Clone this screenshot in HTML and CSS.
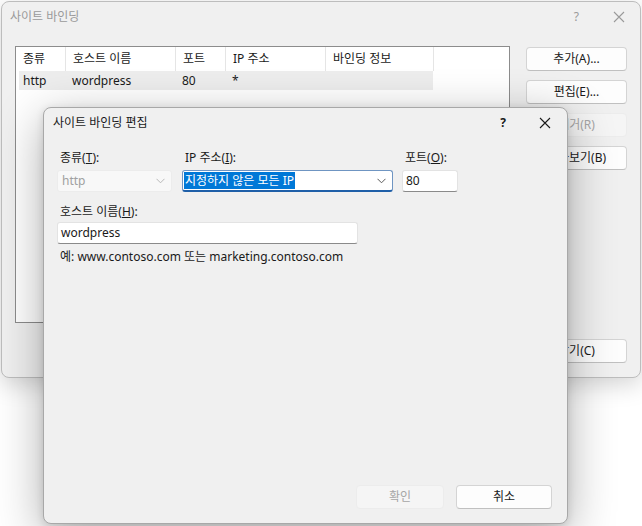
FILE: index.html
```html
<!DOCTYPE html>
<html lang="ko">
<head>
<meta charset="utf-8">
<title>사이트 바인딩</title>
<link rel="stylesheet" href="styles.css">
</head>
<body>
<div class="desk">
  <section class="win outer">
    <header class="titlebar">
      <span class="title inactive">사이트 바인딩</span>
      <span class="caps">
        <span class="help inactive">?</span>
        <svg class="x" width="12" height="12" viewBox="0 0 12 12"><path d="M1 1 L11 11 M11 1 L1 11" stroke="#9a9a9a" stroke-width="1.1" fill="none"/></svg>
      </span>
    </header>
    <div class="outer-body">
      <div class="list">
        <div class="lrow head">
          <span class="c1">종류</span><span class="c2">호스트 이름</span><span class="c3">포트</span><span class="c4">IP 주소</span><span class="c5">바인딩 정보</span>
        </div>
        <div class="lrow item">
          <span class="c1">http</span><span class="c2">wordpress</span><span class="c3">80</span><span class="c4">*</span><span class="c5"></span>
        </div>
      </div>
      <div class="sidebtns">
        <button class="btn">추가(A)...</button>
        <button class="btn">편집(E)...</button>
        <button class="btn disabled">제거(R)</button>
        <button class="btn">찾아보기(B)</button>
        <button class="btn close">닫기(C)</button>
      </div>
    </div>
  </section>

  <section class="win dialog">
    <header class="titlebar dtitle">
      <span class="title">사이트 바인딩 편집</span>
      <span class="caps">
        <span class="help">?</span>
        <svg class="x" width="12" height="12" viewBox="0 0 12 12"><path d="M1 1 L11 11 M11 1 L1 11" stroke="#1a1a1a" stroke-width="1.1" fill="none"/></svg>
      </span>
    </header>
    <div class="dbody">
      <div class="row3">
        <div class="field f1">
          <label>종류(<u>T</u>):</label>
          <div class="combo dis">
            <span>http</span>
            <svg width="9" height="6" viewBox="0 0 9 6"><path d="M0.5 0.8 L4.5 4.8 L8.5 0.8" stroke="#b8b8b8" fill="none"/></svg>
          </div>
        </div>
        <div class="field f2">
          <label>IP 주소(<u>I</u>):</label>
          <div class="combo focus">
            <span class="sel">지정하지 않은 모든 IP</span>
            <svg width="9" height="6" viewBox="0 0 9 6"><path d="M0.5 0.8 L4.5 4.8 L8.5 0.8" stroke="#5a5a5a" fill="none"/></svg>
          </div>
        </div>
        <div class="field f3">
          <label>포트(<u>O</u>):</label>
          <div class="input">80</div>
        </div>
      </div>
      <div class="field host">
        <label>호스트 이름(<u>H</u>):</label>
        <div class="input">wordpress</div>
      </div>
      <p class="hint">예: www.contoso.com 또는 marketing.contoso.com</p>
      <div class="dbtns">
        <button class="btn ok disabled">확인</button>
        <button class="btn cancel">취소</button>
      </div>
    </div>
  </section>
</div>
</body>
</html>
```
FILE: styles.css
```css
html, body {
  margin: 0;
  padding: 0;
  background: #ffffff;
}
body {
  width: 642px;
  height: 526px;
  overflow: hidden;
  font-family: "Noto Sans", "Noto Sans CJK KR", sans-serif;
  font-size: 12px;
  color: #1a1a1a;
}
.desk {
  position: relative;
  width: 642px;
  height: 526px;
}
.win {
  position: absolute;
  box-sizing: border-box;
  background: #f0f0f0;
  border-radius: 8px;
  display: flex;
  flex-direction: column;
}
.outer {
  left: 1px;
  top: 1px;
  width: 640px;
  height: 377px;
  border: 1px solid #bdbdbd;
  box-shadow: 0 6px 24px rgba(0,0,0,0.18);
}
.titlebar {
  display: flex;
  align-items: center;
  justify-content: space-between;
  height: 30px;
  padding: 0 15px 0 8px;
  flex: none;
}
.title {
  font-size: 12px;
  line-height: 16px;
}
.inactive { color: #9a9a9a; }
.caps {
  display: flex;
  align-items: center;
  gap: 34px;
}
.help {
  font-size: 12px;
  line-height: 16px;
}
.outer-body {
  flex: 1;
  display: flex;
  justify-content: space-between;
  padding: 14px 13px 14px 13px;
}
.list {
  box-sizing: border-box;
  width: 495px;
  height: 277px;
  background: #ffffff;
  border: 1px solid #8c8c8c;
}
.lrow {
  display: flex;
  align-items: center;
}
.lrow span {
  box-sizing: border-box;
  padding-left: 7px;
  white-space: nowrap;
}
.head {
  height: 24px;
}
.head span {
  height: 24px;
  line-height: 24px;
  border-right: 1px solid #e5e5e5;
}
.item {
  height: 19px;
  width: 414px;
  margin-left: 3px;
  background: #ededed;
}
.item span { line-height: 19px; }
.c1 { width: 50px; }
.c2 { width: 110px; }
.c3 { width: 50px; }
.c4 { width: 100px; }
.c5 { width: 108px; }
.item .c1 { width: 46px; padding-left: 4px; }

.sidebtns {
  display: flex;
  flex-direction: column;
  gap: 9px;
  padding-top: 1px;
  padding-right: 0;
}
.btn {
  box-sizing: border-box;
  font: inherit;
  font-size: 12px;
  color: #1a1a1a;
  background: #fdfdfd;
  border: 1px solid #d4d4d4;
  border-bottom-color: #c0c0c0;
  border-radius: 4px;
  width: 101px;
  height: 24px;
  padding: 0;
  line-height: 20px;
}
.btn.disabled {
  background: #f5f5f5;
  border-color: #ececec;
  color: #a6a6a6;
}
.btn.close { margin-top: auto; }

.dialog {
  left: 43px;
  top: 107px;
  width: 525px;
  height: 417px;
  border: 1px solid #a8a8a8;
  box-shadow: 0 12px 48px rgba(0,0,0,0.32), 0 2px 8px rgba(0,0,0,0.12);
}
.dtitle {
  height: 29px;
  padding: 0 16px 0 9px;
}
.dtitle .caps { gap: 33px; }
.dtitle .help { font-weight: 700; }
.dbody {
  flex: 1;
  display: flex;
  flex-direction: column;
  padding: 13px 15px 14px 13px;
}
.row3 {
  display: flex;
  gap: 9px;
}
.field {
  display: flex;
  flex-direction: column;
}
.field label {
  line-height: 16px;
  padding-left: 3px;
  margin-bottom: 4px;
}
.f1 { width: 115px; }
.f2 { width: 211px; margin-left: 1px; }
.f3 { width: 56px; }
.combo, .input {
  box-sizing: border-box;
  height: 22px;
  display: flex;
  align-items: center;
  justify-content: space-between;
  padding: 0 6px 0 3px;
  background: #ffffff;
  border: 1px solid #e3e3e3;
  border-bottom-color: #8a8a8a;
  border-radius: 3px;
  line-height: 16px;
}
.combo.dis {
  background: #f8f8f8;
  border-color: #ececec;
  color: #a0a0a0;
}
.combo.dis span { padding-left: 1px; }
.combo.focus {
  border: 1px solid #6f95c2;
  border-bottom: 2px solid #1f5fa8;
  padding-left: 1px;
}
.sel {
  background: #0078d7;
  color: #ffffff;
  padding: 0 1px;
  line-height: 17px;
}
.host {
  margin-top: 12px;
  width: 301px;
}
.host label { margin-bottom: 2px; }
.host .input {
  justify-content: flex-start;
}
.hint {
  margin: 5px 0 0 3px;
  line-height: 16px;
}
.dbtns {
  margin-top: auto;
  display: flex;
  justify-content: flex-end;
  gap: 12px;
}
.dbtns .ok { width: 88px; }
.dbtns .cancel { width: 96px; }
```
